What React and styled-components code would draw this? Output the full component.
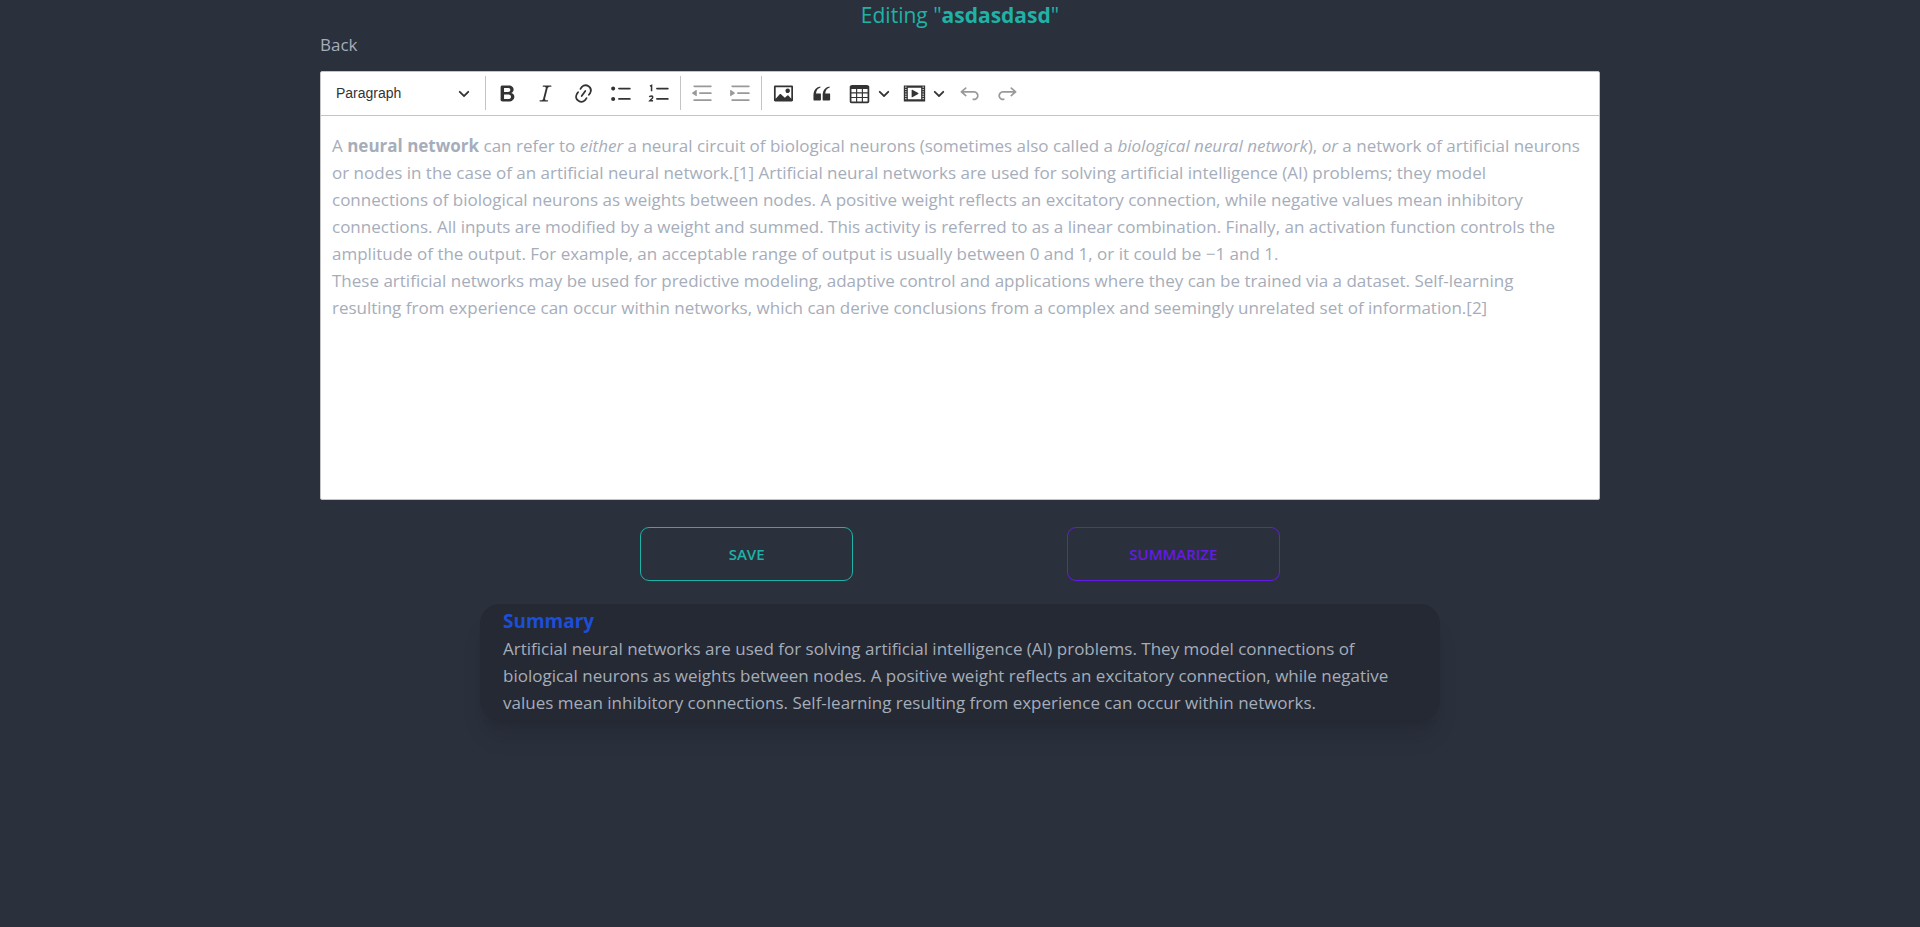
import React from "react";
import styled, { createGlobalStyle } from "styled-components";

const GlobalStyle = createGlobalStyle`
  *, *::before, *::after { box-sizing: border-box; }
  body {
    margin: 0;
    background: #2a303c;
    color: #a6adba;
    font-family: "Segoe UI", "Open Sans", "Noto Sans", sans-serif;
    font-size: 17px;
    line-height: 27px;
  }
  h1, h2, p { margin: 0; }
`;

const Page = styled.main`
  display: flex;
  flex-direction: column;
  align-items: center;
  min-height: 100vh;
`;

const Title = styled.h1`
  font-size: 21px;
  line-height: 31px;
  font-weight: 400;
  color: #1fb2a6;
`;

const Column = styled.div`
  width: 66.6667%;
`;

const BackLink = styled.a`
  display: inline-block;
  color: inherit;
  text-decoration: none;
`;

const Editor = styled.section`
  margin-top: 13px;
  border: 1px solid #c4c4c4;
  border-radius: 2px;
  background: #fff;
`;

const Toolbar = styled.div`
  display: flex;
  align-items: center;
  flex-wrap: wrap;
  gap: 6px;
  padding: 4px 6px 5px;
  border-bottom: 1px solid #c4c4c4;
`;

const Separator = styled.span`
  align-self: stretch;
  width: 1px;
  margin: 0 -1px;
  background: #c4c4c4;
`;

const HeadingPicker = styled.label`
  display: grid;
  grid-template-columns: 1fr 12px;
  align-items: center;
  width: 153px;
  padding-right: 10px;
  color: #333;

  select {
    grid-area: 1 / 1 / 2 / 3;
    appearance: none;
    height: 34px;
    padding: 0 9px;
    border: 0;
    background: none;
    color: inherit;
    font: 14px "Liberation Sans", Arial, sans-serif;
  }

  svg {
    grid-area: 1 / 2;
    pointer-events: none;
  }
`;

const ToolButton = styled.button`
  display: flex;
  align-items: center;
  gap: 7px;
  height: 34px;
  padding: 0 ${(p) => (p.$menu ? "2px" : "4px")} 0 5px;
  border: 0;
  border-radius: 2px;
  background: none;
  color: #333;

  &:disabled { color: #999; }
`;

const Content = styled.div`
  min-height: 383px;
  padding: 16px 11px;
  outline: none;
`;

const Actions = styled.div`
  display: flex;
  justify-content: space-between;
  width: 33.3333%;
  margin: 27px 0 23px;
`;

const ActionButton = styled.button`
  width: 33.3333%;
  height: 54px;
  border: 1px solid currentColor;
  border-radius: 9px;
  background: none;
  color: ${(p) => p.$color};
  font: inherit;
  font-size: 15px;
  font-weight: 600;
  text-transform: uppercase;
`;

const SummaryCard = styled.section`
  width: 50%;
  padding: 4px 23px;
  border-radius: 20px;
  background: #242933;
  box-shadow: 0 20px 25px -5px rgba(0, 0, 0, 0.1), 0 8px 10px -6px rgba(0, 0, 0, 0.1);
`;

const SummaryTitle = styled.h2`
  font-size: 19px;
  line-height: 27px;
  font-weight: 700;
  color: #1d4ed8;
`;

const ICONS = {
  bold: "M10.187 17H5.773c-.637 0-1.092-.138-1.364-.415-.273-.277-.409-.718-.409-1.323V4.738c0-.617.14-1.062.419-1.332.279-.27.73-.406 1.354-.406h4.68c.69 0 1.288.041 1.793.124.506.083.96.242 1.36.478.341.197.644.447.906.75a3.262 3.262 0 0 1 .808 2.162c0 1.401-.722 2.426-2.167 3.075C15.05 10.175 16 11.315 16 13.01a3.756 3.756 0 0 1-2.296 3.504 6.1 6.1 0 0 1-1.517.377c-.571.073-1.238.11-2 .11zm-.217-6.217H7v4.087h3.069c1.977 0 2.965-.69 2.965-2.072 0-.707-.256-1.22-.768-1.537-.512-.319-1.277-.478-2.296-.478zM7 5.13v3.619h2.606c.729 0 1.292-.067 1.69-.2a1.6 1.6 0 0 0 .91-.765c.165-.267.247-.566.247-.897 0-.707-.26-1.176-.778-1.409-.519-.232-1.31-.348-2.375-.348H7z",
  italic: "m9.586 14.633.021.004c-.036.335.095.655.393.962.082.083.173.15.274.201h1.474a.6.6 0 1 1 0 1.2H5.304a.6.6 0 0 1 0-1.2h1.15c.474-.07.809-.182 1.005-.334.157-.122.291-.32.404-.597l2.416-9.55a1.053 1.053 0 0 0-.281-.823 1.12 1.12 0 0 0-.442-.296H8.15a.6.6 0 0 1 0-1.2h6.443a.6.6 0 1 1 0 1.2h-1.195c-.376.056-.65.155-.823.296-.215.175-.423.439-.623.79l-2.366 9.347z",
  link: "m11.077 15 .991-1.416a.75.75 0 1 1 1.229.86l-1.148 1.64a.748.748 0 0 1-.217.206 5.251 5.251 0 0 1-8.503-5.955.741.741 0 0 1 .12-.274l1.147-1.639a.75.75 0 1 1 1.228.86L4.933 10.7l.006.003a3.75 3.75 0 0 0 6.132 4.294l.006.004zm5.494-5.335a.748.748 0 0 1-.12.274l-1.147 1.639a.75.75 0 1 1-1.228-.86l.86-1.23a3.75 3.75 0 0 0-6.144-4.301l-.86 1.229a.75.75 0 0 1-1.229-.86l1.148-1.64a.748.748 0 0 1 .217-.206 5.251 5.251 0 0 1 8.503 5.955zm-4.563-2.532a.75.75 0 0 1 .184 1.045l-3.155 4.505a.75.75 0 1 1-1.229-.86l3.155-4.506a.75.75 0 0 1 1.045-.184z",
  bulleted: "M7 5.75c0 .414.336.75.75.75h9.5a.75.75 0 1 0 0-1.5h-9.5a.75.75 0 0 0-.75.75zm-6 0C1 4.784 1.777 4 2.75 4c.966 0 1.75.777 1.75 1.75 0 .966-.777 1.75-1.75 1.75C1.784 7.5 1 6.723 1 5.75zm6 9c0 .414.336.75.75.75h9.5a.75.75 0 1 0 0-1.5h-9.5a.75.75 0 0 0-.75.75zm-6 0c0-.966.777-1.75 1.75-1.75.966 0 1.75.777 1.75 1.75 0 .966-.777 1.75-1.75 1.75-.966 0-1.75-.777-1.75-1.75z",
  numbered: "M7 5.75c0 .414.336.75.75.75h9.5a.75.75 0 1 0 0-1.5h-9.5a.75.75 0 0 0-.75.75zm0 9c0 .414.336.75.75.75h9.5a.75.75 0 1 0 0-1.5h-9.5a.75.75 0 0 0-.75.75z",
  outdent: "M2 3.75c0 .414.336.75.75.75h14.5a.75.75 0 1 0 0-1.5H2.75a.75.75 0 0 0-.75.75zm5 6c0 .414.336.75.75.75h9.5a.75.75 0 1 0 0-1.5h-9.5a.75.75 0 0 0-.75.75zM2.75 16.5h14.5a.75.75 0 1 0 0-1.5H2.75a.75.75 0 1 0 0 1.5zm1.618-9.55L.98 9.358a.4.4 0 0 0 .013.661l3.39 2.207A.4.4 0 0 0 5 11.892V7.275a.4.4 0 0 0-.632-.326z",
  indent: "M2 3.75c0 .414.336.75.75.75h14.5a.75.75 0 1 0 0-1.5H2.75a.75.75 0 0 0-.75.75zm5 6c0 .414.336.75.75.75h9.5a.75.75 0 1 0 0-1.5h-9.5a.75.75 0 0 0-.75.75zM2.75 16.5h14.5a.75.75 0 1 0 0-1.5H2.75a.75.75 0 1 0 0 1.5zM1.632 6.95 5.02 9.358a.4.4 0 0 1-.013.661l-3.39 2.207A.4.4 0 0 1 1 11.892V7.275a.4.4 0 0 1 .632-.326z",
  image: "M6.91 10.54c.26-.23.64-.21.88.03l3.36 3.14 2.23-2.06a.64.64 0 0 1 .87 0l2.52 2.97V4.5H3.2v10.12l3.71-4.08zm10.27-7.51c.6 0 1.09.47 1.09 1.05v11.84c0 .59-.49 1.06-1.09 1.06H2.79c-.6 0-1.09-.47-1.09-1.06V4.08c0-.58.49-1.05 1.1-1.05h14.38zm-5.22 5.56a1.96 1.96 0 1 1 3.4-1.96 1.96 1.96 0 0 1-3.4 1.96z",
  quote: "M3 10.423a6.5 6.5 0 0 1 6.056-6.408l.038.67C6.448 5.423 5.354 7.663 5.22 10H9c.552 0 .5.432.5.986v4.511c0 .554-.448.503-1 .503h-5c-.552 0-.5-.449-.5-1.003v-4.574zm8 0a6.5 6.5 0 0 1 6.056-6.408l.038.67c-2.646.739-3.74 2.979-3.873 5.315H17c.552 0 .5.432.5.986v4.511c0 .554-.448.503-1 .503h-5c-.552 0-.5-.449-.5-1.003v-4.574z",
  table: "M3 6v3h4V6H3zm0 4v3h4v-3H3zm0 4v3h4v-3H3zm5 3h4v-3H8v3zm5 0h4v-3h-4v3zm4-4v-3h-4v3h4zm0-4V6h-4v3h4zm1.5 8a1.5 1.5 0 0 1-1.5 1.5H3A1.5 1.5 0 0 1 1.5 17V4c.222-.863 1.068-1.5 2-1.5h13c.932 0 1.778.637 2 1.5v13zM12 13v-3H8v3h4zm0-4V6H8v3h4z",
  media: "M18.68 3.03c.6 0 .59-.03.59.55v12.84c0 .59.01.56-.59.56H1.29c-.6 0-.59.03-.59-.56V3.58c0-.58-.01-.55.6-.55h17.38zM15.77 15V5H4.2v10h11.57zM2 4v1h1V4H2zm0 2v1h1V6H2zm0 2v1h1V8H2zm0 2v1h1v-1H2zm0 2v1h1v-1H2zm0 2v1h1v-1H2zM17 4v1h1V4h-1zm0 2v1h1V6h-1zm0 2v1h1V8h-1zm0 2v1h1v-1h-1zm0 2v1h1v-1h-1zm0 2v1h1v-1h-1zM7.5 7.177a.4.4 0 0 1 .593-.351l5.133 2.824a.4.4 0 0 1 0 .7l-5.133 2.824a.4.4 0 0 1-.593-.35V7.176v.001z",
  undo: "m5.042 9.367 2.189 1.837a.75.75 0 0 1-.965 1.149l-3.788-3.18a.747.747 0 0 1-.21-.284.75.75 0 0 1 .17-.945L6.23 4.762a.75.75 0 1 1 .964 1.15L4.863 7.866h8.917A.75.75 0 0 1 14 7.9a4 4 0 1 1-1.477 7.718l.344-1.489a2.5 2.5 0 1 0 1.094-4.73l.008-.032H5.042z",
  redo: "m14.958 9.367-2.189 1.837a.75.75 0 0 0 .965 1.149l3.788-3.18a.747.747 0 0 0 .21-.284.75.75 0 0 0-.17-.945L13.77 4.762a.75.75 0 1 0-.964 1.15l2.331 1.955H6.22A.75.75 0 0 0 6 7.9a4 4 0 1 0 1.477 7.718l-.344-1.489A2.5 2.5 0 1 1 6.039 9.4l-.008-.032h8.927z",
};

function Icon({ name }) {
  return (
    <svg width="23" height="23" viewBox="0 0 20 20" fill="currentColor" aria-hidden="true">
      <path d={ICONS[name]} fillRule={name === "table" || name === "media" ? "evenodd" : "nonzero"} />
      {name === "numbered" && (
        <g fill="none" stroke="currentColor" strokeWidth="1.3">
          <path d="M1.7 3.6 3.1 2.9V8" />
          <path d="M1.3 13.2c.2-1.5 2.8-1.5 2.8 0 0 1.2-1.6 1.8-2.6 3.2h2.9" />
        </g>
      )}
    </svg>
  );
}

function Chevron() {
  return (
    <svg width="12" height="12" viewBox="0 0 10 10" fill="currentColor" aria-hidden="true">
      <path d="M.941 4.523a.75.75 0 1 1 1.06-1.06l3.006 3.005 3.005-3.005a.75.75 0 1 1 1.06 1.06l-3.549 3.55a.75.75 0 0 1-1.168-.136L.941 4.523z" />
    </svg>
  );
}

function Tool({ icon, label, menu, disabled }) {
  return (
    <ToolButton type="button" aria-label={label} $menu={menu} disabled={disabled}>
      <Icon name={icon} />
      {menu && <Chevron />}
    </ToolButton>
  );
}

export default function App() {
  return (
    <Page>
      <GlobalStyle />
      <Title>
        Editing "<b>asdasdasd</b>"
      </Title>
      <Column>
        <BackLink href="#back">Back</BackLink>
        <Editor>
          <Toolbar role="toolbar" aria-label="Editor toolbar">
            <HeadingPicker>
              <select aria-label="Heading" defaultValue="Paragraph">
                <option>Paragraph</option>
              </select>
              <Chevron />
            </HeadingPicker>
            <Separator />
            <Tool icon="bold" label="Bold" />
            <Tool icon="italic" label="Italic" />
            <Tool icon="link" label="Link" />
            <Tool icon="bulleted" label="Bulleted List" />
            <Tool icon="numbered" label="Numbered List" />
            <Separator />
            <Tool icon="outdent" label="Decrease indent" disabled />
            <Tool icon="indent" label="Increase indent" disabled />
            <Separator />
            <Tool icon="image" label="Insert image" />
            <Tool icon="quote" label="Block quote" />
            <Tool icon="table" label="Insert table" menu />
            <Tool icon="media" label="Insert media" menu />
            <Tool icon="undo" label="Undo" disabled />
            <Tool icon="redo" label="Redo" disabled />
          </Toolbar>
          <Content
            contentEditable
            suppressContentEditableWarning
            spellCheck={false}
            role="textbox"
            aria-multiline="true"
            aria-label="Note text"
          >
            <p>
              A <b>neural network</b> can refer to <i>either</i> a neural circuit of biological neurons (sometimes
              also called a <i>biological neural network</i>), <i>or</i> a network of artificial neurons
              <br />
              or nodes in the case of an artificial neural network.[1] Artificial neural networks are used for solving
              artificial intelligence (AI) problems; they model
              <br />
              connections of biological neurons as weights between nodes. A positive weight reflects an excitatory
              connection, while negative values mean inhibitory
              <br />
              connections. All inputs are modified by a weight and summed. This activity is referred to as a linear
              combination. Finally, an activation function controls the
              <br />
              amplitude of the output. For example, an acceptable range of output is usually between 0 and 1, or it
              could be −1 and 1.
            </p>
            <p>
              These artificial networks may be used for predictive modeling, adaptive control and applications where
              they can be trained via a dataset. Self-learning
              <br />
              resulting from experience can occur within networks, which can derive conclusions from a complex and
              seemingly unrelated set of information.[2]
            </p>
          </Content>
        </Editor>
      </Column>
      <Actions>
        <ActionButton type="button" $color="#1fb2a6">Save</ActionButton>
        <ActionButton type="button" $color="#661ae6">Summarize</ActionButton>
      </Actions>
      <SummaryCard>
        <SummaryTitle>Summary</SummaryTitle>
        <p>
          Artificial neural networks are used for solving artificial intelligence (AI) problems. They model
          connections of biological neurons as weights between nodes. A positive weight reflects an excitatory
          connection, while negative values mean inhibitory connections. Self-learning resulting from experience can
          occur within networks.
        </p>
      </SummaryCard>
    </Page>
  );
}
